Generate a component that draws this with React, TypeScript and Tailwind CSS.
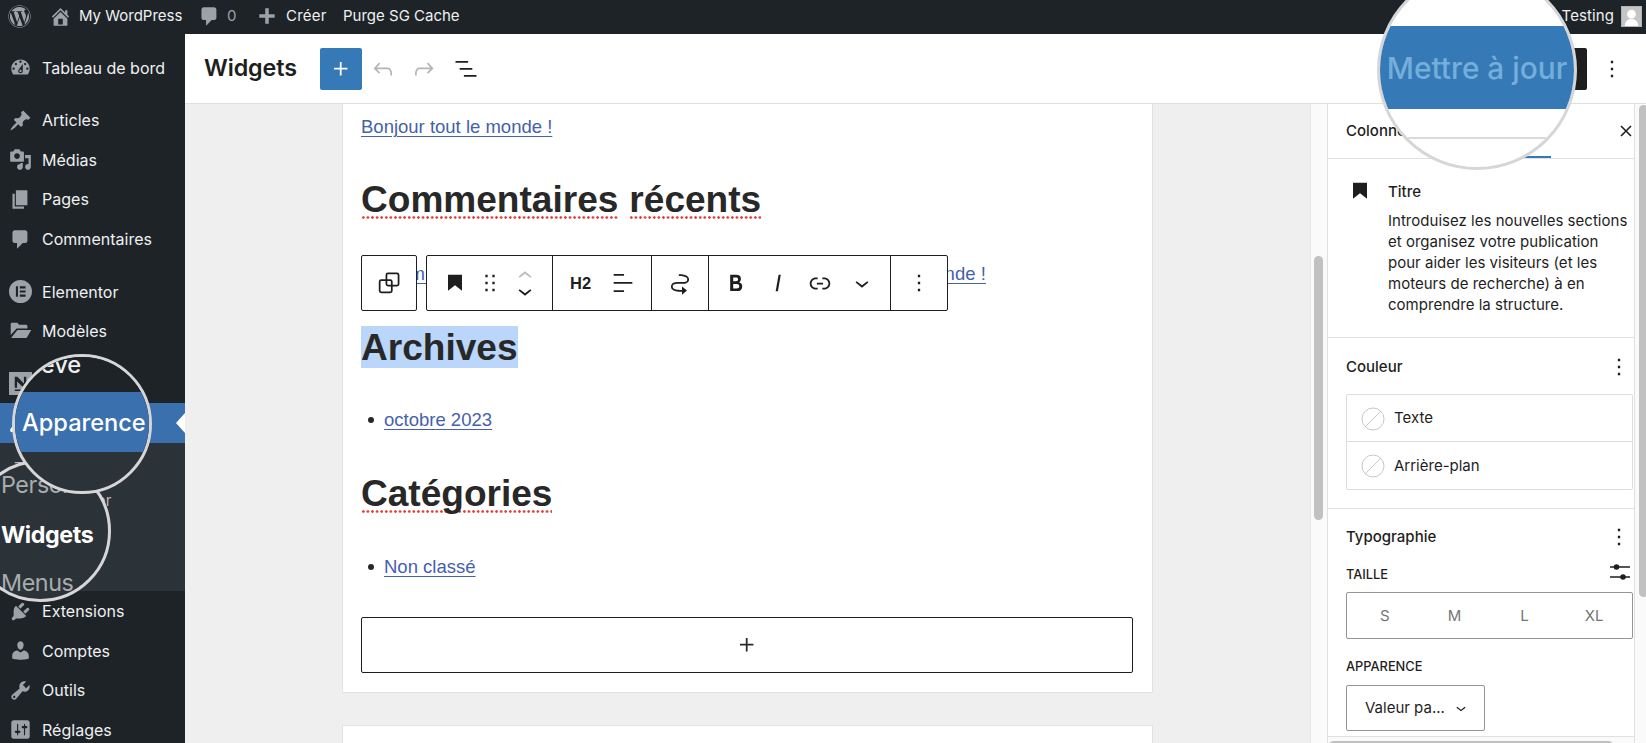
import type { ReactNode } from "react"
import { FaWordpress } from "react-icons/fa"

const dash = {
  home: "M16 8.5l1.53 1.53-1.06 1.06L10 4.6l-6.47 6.49-1.06-1.06L10 2.5l4 4v-2h2v4zm-6-2.46l6 5.99V18H4v-5.97zM12 17v-5H8v5h4z",
  comments: "M5 2h9c1.1 0 2 .9 2 2v7c0 1.1-.9 2-2 2h-2l-5 5v-5H5c-1.1 0-2-.9-2-2V4c0-1.1.9-2 2-2z",
  add: "M8.4 3h3.2v5.4H17v3.2h-5.4V17H8.4v-5.4H3V8.4h5.4z",
  dashboard:
    "M3.76 16h12.48c1.1-1.37 1.76-3.11 1.76-5 0-4.42-3.58-8-8-8s-8 3.58-8 8c0 1.89.66 3.63 1.76 5zM10 4c.55 0 1 .45 1 1s-.45 1-1 1-1-.45-1-1 .45-1 1-1zM6 6c.55 0 1 .45 1 1s-.45 1-1 1-1-.45-1-1 .45-1 1-1zm8 0c.55 0 1 .45 1 1s-.45 1-1 1-1-.45-1-1 .45-1 1-1zm-5.37 5.55L12 7v6c0 1.1-.9 2-2 2s-2-.9-2-2c0-.57.24-1.08.63-1.45zM4 10c.55 0 1 .45 1 1s-.45 1-1 1-1-.45-1-1 .45-1 1-1zm12 0c.55 0 1 .45 1 1s-.45 1-1 1-1-.45-1-1 .45-1 1-1zm-5 3c0-.55-.45-1-1-1s-1 .45-1 1 .45 1 1 1 1-.45 1-1z",
  post: "M10.44 3.02l1.82-1.82 6.36 6.35-1.83 1.82c-1.05-.68-2.48-.57-3.41.36l-.75.75c-.92.93-1.04 2.35-.35 3.41l-1.83 1.82-2.41-2.41-2.8 2.79c-.42.42-3.38 2.71-3.8 2.29s1.86-3.39 2.28-3.81l2.79-2.79L4.1 9.36l1.83-1.82c1.05.69 2.48.57 3.4-.36l.75-.75c.93-.92 1.05-2.35.36-3.41z",
  media:
    "M13 11V4c0-.55-.45-1-1-1h-1.67L9 1H5L3.67 3H2c-.55 0-1 .45-1 1v7c0 .55.45 1 1 1h10c.55 0 1-.45 1-1zM7 4.5c1.38 0 2.5 1.12 2.5 2.5S8.38 9.5 7 9.5 4.5 8.38 4.5 7 5.62 4.5 7 4.5zM14 6h5v10.5c0 1.38-1.12 2.5-2.5 2.5S14 17.88 14 16.5s1.12-2.5 2.5-2.5c.17 0 .34.02.5.05V9h-3V6zm-4 8.05V13h2v3.5c0 1.38-1.12 2.5-2.5 2.5S7 17.88 7 16.5 8.12 14 9.5 14c.17 0 .34.02.5.05z",
  page: "M6 15V2h10v13H6zm-1 1h8v2H3V5h2v11z",
  elementor:
    "M10 0a10 10 0 1 0 0 20 10 10 0 0 0 0-20zM6 5.5h1.8v9H6zM9.4 5.5h5v1.8h-5zM9.4 9.1h5v1.8h-5zM9.4 12.7h5v1.8h-5z",
  folder:
    "M1.5 3.6C1.5 2.8 2 2.3 2.8 2.3h4.4l1.6 1.9h6c.8 0 1.2.5 1.2 1.2v1.9H6.6L1.5 13zM7.3 8.6h12L16 14.6c-.4.7-.9 1.1-1.8 1.1H1.8z",
  neve: "M0 0h20v20H0zM5 4.2v9.6h2V8.2l5.8 5.6H15V4.2h-2v5.7L7.2 4.2zM5 15.3h10v1.2H5z",
  appearance:
    "M14.48 11.06L7.41 3.99l1.5-1.5c.5-.56 2.3-.47 3.51.32 1.21.8 1.43 1.28 2.91 2.1 1.18.64 2.45 1.26 4.45.85zm-.71.71L6.7 4.7 4.93 6.47c-.39.39-.39 1.02 0 1.41l1.06 1.06c.39.39.39 1.03 0 1.42-.6.6-1.43 1.11-2.21 1.69-.35.26-.7.53-1.01.84C1.43 14.23.4 16.08 1.4 17.07c.99 1 2.84-.03 4.18-1.36.31-.31.58-.66.85-1.02.57-.78 1.08-1.61 1.69-2.21.39-.39 1.02-.39 1.41 0l1.06 1.06c.39.39 1.02.39 1.41 0z",
  plugins:
    "M13.11 4.36L9.87 7.6 8 5.73l3.24-3.24c.35-.34 1.05-.2 1.56.32.52.51.66 1.21.31 1.55zm-8 1.77l.91-1.12 9.01 9.01-1.19.84c-.71.71-2.63 1.16-3.82 1.16H6.14L4.9 17.26c-.59.59-1.54.59-2.12 0-.59-.58-.59-1.53 0-2.12l1.24-1.24v-3.88c0-1.13.4-3.19 1.09-3.89zm7.26 3.97l3.24-3.24c.34-.35 1.04-.21 1.55.31.52.51.66 1.21.31 1.55l-3.24 3.25z",
  users:
    "M10 9.25c-2.27 0-2.73-3.44-2.73-3.44C7 4.02 7.82 2 9.97 2c2.16 0 2.98 2.02 2.71 3.81 0 0-.41 3.44-2.68 3.44zm0 2.57L12.72 10c2.39 0 4.52 2.33 4.52 4.53v2.49s-3.65 1.13-7.24 1.13c-3.65 0-7.24-1.13-7.24-1.13v-2.49c0-2.25 1.94-4.48 4.47-4.48z",
  tools:
    "M16.68 9.77c-1.34 1.34-3.3 1.67-4.95.99l-5.41 6.52c-.99.99-2.59.99-3.58 0s-.99-2.59 0-3.57l6.52-5.42c-.68-1.65-.35-3.61.99-4.95 1.28-1.28 3.12-1.62 4.72-1.06l-2.89 2.89 2.82 2.82 2.86-2.87c.53 1.58.18 3.39-1.08 4.65zM3.81 16.21c.4.39 1.04.39 1.43 0 .4-.4.4-1.04 0-1.43-.39-.4-1.03-.4-1.43 0-.39.39-.39 1.03 0 1.43z",
  settings:
    "M18 16V4c0-1.1-.9-2-2-2H4c-1.1 0-2 .9-2 2v12c0 1.1.9 2 2 2h12c1.1 0 2-.9 2-2zM8 11h1c.55 0 1 .45 1 1s-.45 1-1 1H8v1.5c0 .28-.22.5-.5.5s-.5-.22-.5-.5V13H6c-.55 0-1-.45-1-1s.45-1 1-1h1V5.5c0-.28.22-.5.5-.5s.5.22.5.5V11zm5-2h-1c-.55 0-1-.45-1-1s.45-1 1-1h1V5.5c0-.28.22-.5.5-.5s.5.22.5.5V7h1c.55 0 1 .45 1 1s-.45 1-1 1h-1v5.5c0 .28-.22.5-.5.5s-.5-.22-.5-.5V9z",
}

const wp = {
  plus: "M11 12.5V17.5H12.5V12.5H17.5V11H12.5V6H11V11H6V12.5H11Z",
  undo: "M18.3 11.7c-.6-.6-1.4-.9-2.3-.9H6.7l2.9-3.3-1.1-1-4.5 5L8.5 16l1-1-2.7-2.7H16c.5 0 .9.2 1.3.5 1 1 1 3.4 1 4.5v.3h1.5v-.2c0-1.5 0-4.3-1.5-5.7z",
  redo: "M15.6 6.5l-1.1 1 2.9 3.3H8c-.9 0-1.7.3-2.3.9-1.4 1.5-1.4 4.2-1.4 5.6v.2h1.5v-.3c0-1.1 0-3.5 1-4.5.3-.3.7-.5 1.3-.5h9.2L14.5 15l1.1 1.1 4.6-4.6-4.6-5z",
  listView: "M13.8 5.2H3v1.5h10.8V5.2zm-3.6 12v1.5H21v-1.5H10.2zm7.2-6H6.6v1.5h10.8v-1.5z",
  heading: "M6 5V18.5911L12 13.8473L18 18.5911V5H6Z",
  drag: "M8 7h2V5H8v2zm0 6h2v-2H8v2zm0 6h2v-2H8v2zm6-14v2h2V5h-2zm0 8h2v-2h-2v2zm0 6h2v-2h-2v2z",
  up: "M6.5 12.4L12 8l5.5 4.4-.9 1.2L12 10l-4.5 3.6-1-1.2z",
  down: "M17.5 11.6L12 16l-5.5-4.4.9-1.2L12 14l4.5-3.6 1 1.2z",
  align: "M4 19.8h8.9v-1.5H4v1.5zm8.9-15.6H4v1.5h8.9V4.2zm-8.9 7v1.5h16v-1.5H4z",
  moveTo:
    "M19.75 9c0-1.257-.565-2.197-1.39-2.858-.797-.64-1.827-1.017-2.815-1.247-1.802-.42-3.703-.403-4.383-.396L11 4.5V6l.177-.001c.696-.006 2.416-.02 4.028.356.887.207 1.67.518 2.216.957.52.416.829.945.829 1.688 0 .592-.167.966-.407 1.23-.255.281-.656.508-1.236.674-1.19.34-2.82.346-4.607.346h-.077c-1.692 0-3.527 0-4.942.404-.732.209-1.424.545-1.935 1.108-.526.579-.796 1.33-.796 2.238 0 1.257.565 2.197 1.39 2.858.797.64 1.827 1.017 2.815 1.247 1.802.42 3.703.403 4.383.396L13 19.5h.714V22L18 18.5 13.714 15v3H13l-.177.001c-.696.006-2.416.02-4.028-.356-.887-.207-1.67-.518-2.216-.957-.52-.416-.829-.945-.829-1.688 0-.592.167-.966.407-1.23.255-.281.656-.508 1.237-.674 1.189-.34 2.819-.346 4.606-.346h.077c1.692 0 3.527 0 4.941-.404.732-.209 1.425-.545 1.936-1.108.526-.579.796-1.33.796-2.238z",
  bold: "M14.7 11.3c1-.6 1.5-1.6 1.5-3 0-2.3-1.3-3.4-4-3.4H7v14h5.8c1.4 0 2.5-.3 3.3-1 .8-.7 1.2-1.7 1.2-2.9.1-1.9-.8-3.1-2.6-3.7zm-5.1-4h2.3c.6 0 1.1.1 1.4.4.3.3.5.7.5 1.2s-.2 1-.5 1.2c-.3.3-.8.4-1.4.4H9.6V7.3zm4.6 9c-.4.3-1 .4-1.7.4H9.6v-3.9h2.9c.7 0 1.3.2 1.7.5.4.3.6.8.6 1.5s-.2 1.2-.6 1.5z",
  italic: "M12.5 5L10 19h1.9l2.5-14z",
  link: "M15.6 7.2H14v1.5h1.6c2 0 3.7 1.7 3.7 3.7s-1.7 3.7-3.7 3.7H14v1.5h1.6c2.8 0 5.2-2.3 5.2-5.2 0-2.9-2.3-5.2-5.2-5.2zM4.7 12.4c0-2 1.7-3.7 3.7-3.7H10V7.2H8.400c-2.900 0-5.200 2.300-5.200 5.200 0 2.900 2.300 5.200 5.200 5.200H10v-1.500H8.400c-2 0-3.700-1.700-3.700-3.700zm4.600.900h5.300v-1.500H9.300v1.500z",
  more: "M13 19h-2v-2h2v2zm0-6h-2v-2h2v2zm0-6h-2V5h2v2z",
}

function Dash({ d, className = "size-[23px]" }: { d: string; className?: string }) {
  return (
    <svg viewBox="0 0 20 20" fill="currentColor" fillRule="evenodd" className={`shrink-0 ${className}`}>
      <path d={d} />
    </svg>
  )
}

function Icon({ d, className = "size-7" }: { d: string; className?: string }) {
  return (
    <svg viewBox="0 0 24 24" fill="currentColor" className={`shrink-0 ${className}`}>
      <path d={d} />
    </svg>
  )
}

function AdminBar() {
  return (
    <header className="flex h-[34px] shrink-0 items-center bg-[#1d2327] pb-[2px] text-[15px] text-[#f0f0f1]">
      <FaWordpress className="ml-2 size-[23px] text-[#9ca2a7]" />
      <Dash d={dash.home} className="ml-[18px] size-[23px] text-[#9ca2a7]" />
      <span className="ml-[7px] w-[103px] whitespace-nowrap">My WordPress</span>
      <Dash d={dash.comments} className="ml-[16px] size-[23px] text-[#9ca2a7]" />
      <span className="ml-[6px] w-[10px] text-[#9ca2a7]">0</span>
      <Dash d={dash.add} className="ml-[19px] size-[22px] text-[#9ca2a7]" />
      <span className="ml-[8px] w-[40px] tracking-[0.200px] whitespace-nowrap">Créer</span>
      <span className="ml-[17px] whitespace-nowrap">Purge SG Cache</span>
      <span className="ml-auto tracking-[0.100px]">Testing</span>
      <span className="ml-[7px] mr-1 flex size-[21px] border border-[#b4b4b4] bg-[#c5c5c5]">
        <svg viewBox="0 0 20 20" fill="#fff" className="size-full">
          <circle cx="10" cy="7.500" r="4.600" />
          <path d="M3 20c0-5 3-7.500 7-7.500s7 2.500 7 7.500z" />
        </svg>
      </span>
    </header>
  )
}

function MenuItem({ icon, label }: { icon: string; label: string }) {
  return (
    <li className="flex h-[39.6px] items-center gap-[10px] pl-[9px] text-[#f0f0f1]">
      <Dash d={icon} className="size-[23px] text-[#9ca2a7]" />
      {label}
    </li>
  )
}

function AdminMenu() {
  return (
    <nav className="w-[185px] shrink-0 bg-[#1d2327] pt-[14px] text-[16px] tracking-[0.020px]">
      <ul>
        <MenuItem icon={dash.dashboard} label="Tableau de bord" />
      </ul>
      <ul className="mt-[12.9px]">
        <MenuItem icon={dash.post} label="Articles" />
        <MenuItem icon={dash.media} label="Médias" />
        <MenuItem icon={dash.page} label="Pages" />
        <MenuItem icon={dash.comments} label="Commentaires" />
      </ul>
      <ul className="mt-[12.9px]">
        <MenuItem icon={dash.elementor} label="Elementor" />
        <MenuItem icon={dash.folder} label="Modèles" />
      </ul>
      <ul className="mt-[12.9px]">
        <MenuItem icon={dash.neve} label="" />
        <li className="flex h-[39.6px] items-center justify-between bg-[#3b70ae] pl-[9px] text-white">
          <Dash d={dash.appearance} />
          <svg viewBox="0 0 9 20" fill="#fff" className="h-5 w-[9px]">
            <path d="M9 0v20L0 10z" />
          </svg>
        </li>
        <li className="h-[148.2px] bg-[#2c3338] pt-[8px] pl-[14px] text-[15.1px] leading-[33px] text-[#b4b9be]">
          <p>Thèmes</p>
          <p>Personnaliser</p>
        </li>
        <MenuItem icon={dash.plugins} label="Extensions" />
        <MenuItem icon={dash.users} label="Comptes" />
        <MenuItem icon={dash.tools} label="Outils" />
        <MenuItem icon={dash.settings} label="Réglages" />
      </ul>
    </nav>
  )
}

function EditorHeader() {
  return (
    <div className="flex h-[70px] shrink-0 items-center border-b border-[#e0e0e0] bg-white pl-[19px] text-[#1e1e1e]">
      <h1 className="w-[116px] text-[23.3px] font-semibold tracking-[-0.1px]">Widgets</h1>
      <button className="flex size-[42px] items-center justify-center rounded-[2px] bg-[#3579b6] text-white">
        <Icon d={wp.plus} />
      </button>
      <span className="ml-[7px] flex gap-[13px] text-[#b5b5b5]">
        <Icon d={wp.undo} />
        <Icon d={wp.redo} />
      </span>
      <Icon d={wp.listView} className="ml-[14px] size-7" />
      <span className="ml-auto h-[42px] w-[130px] rounded-[2px] bg-[#1e1e1e]" />
      <Icon d={wp.more} className="ml-[11px] mr-[20px] size-7" />
    </div>
  )
}

function Misspelled({ children }: { children: ReactNode }) {
  return (
    <span className="inline-block h-[41px] bg-[radial-gradient(circle,#e0403c_1.1px,transparent_1.5px)] bg-[length:4.6px_3px] bg-bottom-left bg-repeat-x">
      {children}
    </span>
  )
}

function BlockToolbar() {
  return (
    <div className="absolute top-[151px] left-[18px] flex h-14 gap-[9px] text-[#1e1e1e]">
      <div className="flex w-14 items-center justify-center rounded-[2px] border border-[#1e1e1e] bg-white">
        <svg viewBox="0 0 24 24" fill="none" stroke="currentColor" strokeWidth="1.5" className="size-7">
          <rect x="9.8" y="3.8" width="10.4" height="10.4" rx="1.3" />
          <rect x="4" y="9.6" width="10.4" height="10.4" rx="1.3" />
        </svg>
      </div>
      <div className="flex w-[522px] divide-x divide-[#1e1e1e] rounded-[2px] border border-[#1e1e1e] bg-white">
        <div className="flex w-[126px] items-center pl-[14px]">
          <Icon d={wp.heading} />
          <Icon d={wp.drag} className="ml-[7px] size-7" />
          <div className="ml-[7px] flex flex-col">
            <Icon d={wp.up} className="size-7 text-[#bbb]" />
            <Icon d={wp.down} className="-mt-[13px] size-7" />
          </div>
        </div>
        <div className="flex w-[99px] items-center pl-[17px]">
          <span className="w-[25px] text-[16.5px] font-bold">H2</span>
          <Icon d={wp.align} className="ml-[14px] size-7" />
        </div>
        <div className="flex w-[57px] items-center justify-center">
          <Icon d={wp.moveTo} />
        </div>
        <div className="flex w-[182px] items-center gap-[14px] pl-[13px]">
          <Icon d={wp.bold} />
          <Icon d={wp.italic} />
          <Icon d={wp.link} />
          <Icon d={wp.down} />
        </div>
        <div className="flex flex-1 items-center justify-center">
          <Icon d={wp.more} />
        </div>
      </div>
    </div>
  )
}

const heading = "h-[42px] text-[37.05px] leading-[42px] font-bold text-[#282828]"
const link = "text-[#4461ad] underline decoration-1 underline-offset-[3px]"
const bullet = "flex items-center pl-[7px] before:mr-[10px] before:size-[6px] before:rounded-full before:bg-[#282828]"

function Canvas() {
  return (
    <main className="flex min-w-0 flex-1 flex-col items-start gap-[32px] overflow-hidden bg-[#efefef] pl-[157px] font-['Liberation_Sans',sans-serif]">
      <section className="relative h-[588.5px] w-[811px] shrink-0 border border-t-0 border-[#e2e2e2] bg-white px-[18px] pt-2 text-[18.5px] leading-[30px] text-[#282828]">
        <p>
          <a className={link}>Bonjour tout le monde !</a>
        </p>
        <h2 className={`mt-9 flex gap-[11px] ${heading}`}>
          <Misspelled>Commentaires</Misspelled> <Misspelled>récents</Misspelled>
        </h2>
        <p className="mt-[39px] tracking-[0.03px] whitespace-nowrap">
          <a className={link}>Un commentateur ou commentatrice WordPress</a> sur <a className={link}>Bonjour tout le monde !</a>
        </p>
        <h2 className={`mt-[37px] ${heading}`}>
          <span className="bg-[#bad6fb]">Archives</span>
        </h2>
        <ul className="mt-[37px]">
          <li className={bullet}>
            <a className={link}>octobre 2023</a>
          </li>
        </ul>
        <h2 className={`mt-[37px] ${heading}`}>
          <Misspelled>Catégories</Misspelled>
        </h2>
        <ul className="mt-[38px]">
          <li className={bullet}>
            <a className={link}>Non classé</a>
          </li>
        </ul>
        <button className="mt-[35px] flex h-[56px] w-[772px] items-center justify-center rounded-[2px] border border-[#1e1e1e]">
          <Icon d={wp.plus} />
        </button>
        <BlockToolbar />
      </section>
      <section className="h-[60px] w-[811px] shrink-0 border border-[#e2e2e2] bg-white" />
    </main>
  )
}

function ColorRow({ label }: { label: string }) {
  return (
    <div className="flex h-[47px] items-center gap-[9px] pt-px pl-[14px]">
      <svg viewBox="0 0 24 24" fill="none" stroke="#c8c8c8" className="size-6">
        <circle cx="12" cy="12" r="11" />
        <path d="M4 20L20 4" />
      </svg>
      {label}
    </div>
  )
}

function Inspector() {
  return (
    <aside className="flex w-[308px] shrink-0 flex-col border-x border-[#e0e0e0] bg-white text-[15px] text-[#1e1e1e]">
      <div className="flex h-[55px] shrink-0 items-center border-b border-[#e0e0e0] pl-[18px] font-medium">
        Colonne
        <span className="ml-[65px] h-[2px] w-[80px] translate-y-[26px] bg-[#3579b6]" />
        <svg viewBox="0 0 12 12" stroke="currentColor" strokeWidth="1.6" className="mr-[2px] ml-auto size-3">
          <path d="M1 1l10 10M11 1L1 11" />
        </svg>
      </div>
      <div className="flex h-[179px] shrink-0 border-b border-[#e0e0e0] pt-[18px] pl-[18px]">
        <Icon d={wp.heading} />
        <div className="ml-[14px] pt-[3px] whitespace-nowrap">
          <h2 className="leading-[23px] font-medium">Titre</h2>
          <p className="mt-[7px] tracking-[0.02px] leading-[21.1px]">
            Introduisez les nouvelles sections
            <br />
            et organisez votre publication
            <br />
            pour aider les visiteurs (et les
            <br />
            moteurs de recherche) à en
            <br />
            comprendre la structure.
          </p>
        </div>
      </div>
      <div className="h-[171px] shrink-0 border-b border-[#e0e0e0] pt-[14px] pr-px pl-[18px]">
        <div className="flex h-[30px] items-center justify-between font-medium">
          Couleur
          <Icon d={wp.more} />
        </div>
        <div className="mt-[12px] divide-y divide-[#ddd] rounded-[2px] border border-[#ddd]">
          <ColorRow label="Texte" />
          <ColorRow label="Arrière-plan" />
        </div>
      </div>
      <div className="h-[228px] shrink-0 border-b border-[#e0e0e0] pt-[13px] pr-px pl-[18px]">
        <div className="flex h-[30px] items-center justify-between font-medium">
          Typographie
          <Icon d={wp.more} />
        </div>
        <div className="mt-[8px] flex h-7 items-center justify-between pt-[2px] text-[12.8px] font-medium">
          TAILLE
          <svg viewBox="0 0 20 16" stroke="currentColor" strokeWidth="1.6" className="mr-[3px] mb-[6px] h-4 w-5">
            <path d="M0 3h20M0 13h20" />
            <circle cx="6.5" cy="3" r="2" fill="currentColor" />
            <circle cx="13" cy="13" r="2" fill="currentColor" />
          </svg>
        </div>
        <div className="mt-[4px] grid h-[47px] grid-cols-4 items-center rounded-[2px] border border-[#949494] px-[3px] pt-px text-center text-[#757575]">
          <span>S</span>
          <span>M</span>
          <span>L</span>
          <span>XL</span>
        </div>
        <div className="mt-[18px] h-5 text-[12.8px] leading-5 font-medium">APPARENCE</div>
        <div className="mt-[8px] flex h-[46px] w-[139px] items-center rounded-[2px] border border-[#949494] pl-[18px]">
          Valeur pa...
          <Icon d={wp.down} className="ml-[6px] size-5" />
        </div>
      </div>
      <div className="h-[10px] shrink-0 bg-[#fafafa] pt-[4px] pl-[1px]">
        <div className="h-[9px] w-[284px] rounded-full bg-[#c1c1c1]" />
      </div>
    </aside>
  )
}

// Magnifier bubbles drawn over the interface
function Lenses() {
  return (
    <>
      <div className="absolute top-[460px] left-[-31px] h-[142px] w-[142px] overflow-hidden rounded-full border-3 border-[#d6d6d8] bg-[#2c3338] pl-[29px] text-[23.3px] tracking-[-0.4px] text-[#a7acb1]">
        <p className="mt-[7px] h-[49px] leading-[30px]">Personnaliser</p>
        <p className="h-[49px] leading-[31px] font-bold text-white">Widgets</p>
        <p className="leading-[30px]">Menus</p>
      </div>
      <div className="absolute top-[354px] left-[12px] flex h-[140px] w-[140px] flex-col overflow-hidden rounded-full border-3 border-[#d6d6d8] bg-[#2c3338] text-[23.6px] text-[#f0f0f1]">
        <p className="h-[35px] shrink-0 bg-[#1d2327] pl-[8px] leading-[15px] font-medium">Neve</p>
        <p className="h-[60px] shrink-0 bg-[#3b70ae] pl-[7px] leading-[61px] font-medium text-white">Apparence</p>
      </div>
      <div className="absolute top-[-30px] left-[1377px] flex h-[200px] w-[200px] flex-col overflow-hidden rounded-full border-3 border-[#d6d6d8] bg-white">
        <p className="mt-[53px] h-[83px] shrink-0 bg-[#3579b6] text-center text-[29.8px] leading-[84px] font-medium whitespace-nowrap text-[#74aedb]">
          Mettre à jour
        </p>
        <div className="mt-[28px] h-[2px] shrink-0 bg-[#dadada]" />
      </div>
    </>
  )
}

export default function App() {
  return (
    <div className="relative flex h-[743px] w-[1646px] flex-col overflow-hidden bg-white font-['Inter',sans-serif]">
      <AdminBar />
      <div className="flex min-h-0 flex-1">
        <AdminMenu />
        <div className="flex min-w-0 flex-1 flex-col">
          <EditorHeader />
          <div className="flex min-h-0 flex-1">
            <Canvas />
            <div className="w-[17px] shrink-0 border-l border-[#e8e8e8] bg-[#fafafa] pt-[152px] pl-[3px]">
              <div className="h-[264px] w-[9px] rounded-full bg-[#c1c1c1]" />
            </div>
            <Inspector />
            <div className="w-[11px] shrink-0 overflow-hidden bg-[#fafafa] pt-px pl-1">
              <div className="h-[492px] w-[9px] rounded-full bg-[#c1c1c1]" />
            </div>
          </div>
        </div>
      </div>
      <Lenses />
    </div>
  )
}
